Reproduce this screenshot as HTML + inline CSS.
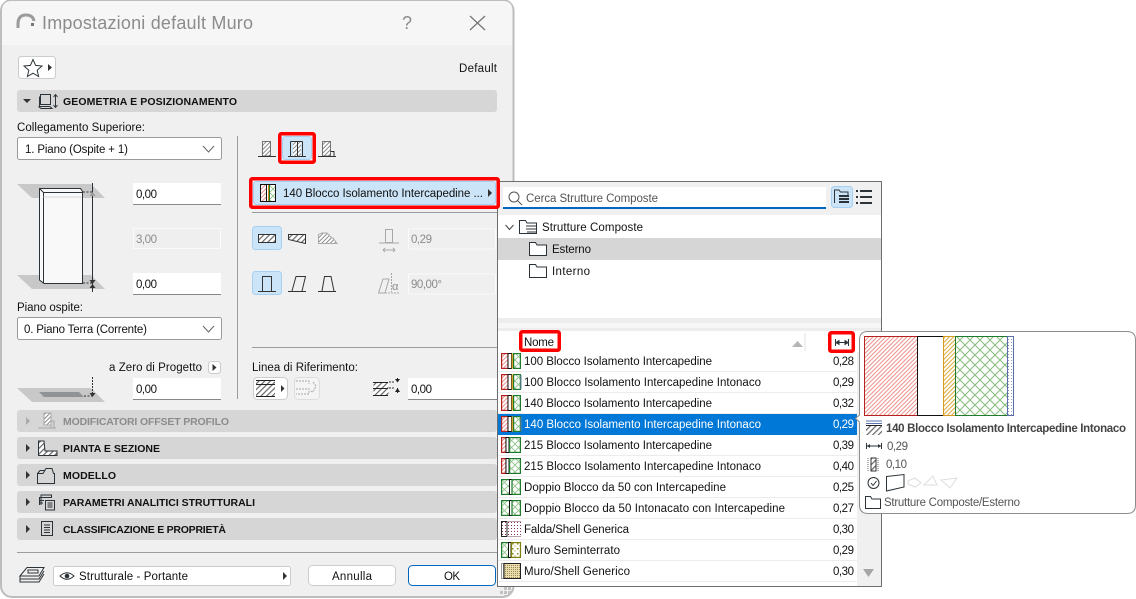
<!DOCTYPE html>
<html><head><meta charset="utf-8"><style>
html,body{margin:0;padding:0;background:#fff;width:1136px;height:599px;overflow:hidden}
svg{display:block}
text{font-family:"Liberation Sans",sans-serif;font-size:11.5px;fill:#111}
.b{font-weight:bold;font-size:10.5px}
.g{fill:#8c8c8c}
.ln{fill:none;stroke:#2b3338;stroke-width:1}
.lg{fill:none;stroke:#a8a8a8;stroke-width:1}
.inp{fill:#fff;stroke:none}
</style></head><body>
<svg xmlns="http://www.w3.org/2000/svg" width="1136" height="599" viewBox="0 0 1136 599">
<defs>
<pattern id="hr" width="3" height="3" patternUnits="userSpaceOnUse" patternTransform="rotate(45)"><rect width="3" height="3" fill="#fff"/><rect width="1" height="3" fill="#ee8f8b"/></pattern>
<pattern id="ho" width="3" height="3" patternUnits="userSpaceOnUse" patternTransform="rotate(45)"><rect width="3" height="3" fill="#fff"/><rect width="1" height="3" fill="#e0a93a"/></pattern>
<pattern id="hg" width="3" height="3" patternUnits="userSpaceOnUse" patternTransform="rotate(45)"><rect width="3" height="3" fill="#fff"/><rect width="1" height="3" fill="#8a8a8a"/></pattern>
<pattern id="hd" width="4" height="4" patternUnits="userSpaceOnUse" patternTransform="rotate(45)"><rect width="4" height="4" fill="#fff"/><rect width="1.2" height="4" fill="#666"/></pattern>
<pattern id="cg" width="10" height="10" patternUnits="userSpaceOnUse"><rect width="10" height="10" fill="#fff"/><path d="M0 0L10 10M10 0L0 10" stroke="#86bb7c" stroke-width="1"/></pattern>
<pattern id="cs" width="7" height="7" patternUnits="userSpaceOnUse"><rect width="7" height="7" fill="#fff"/><path d="M0 0L7 7M7 0L0 7" stroke="#8cc284" stroke-width=".8"/></pattern>
<pattern id="dp" width="3" height="3" patternUnits="userSpaceOnUse"><rect width="3" height="3" fill="#fff"/><rect x="1" y="1" width="1" height="1" fill="#8a3550"/></pattern>
<pattern id="dy" width="2" height="2" patternUnits="userSpaceOnUse"><rect width="2" height="2" fill="#e8dcb0"/><rect width="1" height="1" fill="#9b8a4a"/></pattern>
<pattern id="ds" width="5" height="5" patternUnits="userSpaceOnUse"><rect width="5" height="5" fill="#fff"/><rect x="1" y="1" width="1.500" height="1.500" fill="#8a8a10"/><rect x="3.500" y="3.500" width="1" height="1" fill="#8a8a10"/></pattern>
<pattern id="db" width="3" height="3" patternUnits="userSpaceOnUse"><rect width="3" height="3" fill="#fff"/><rect width="1" height="1" fill="#8f9dc8"/></pattern>

<g id="sA"><rect x=".6" y=".6" width="6.4" height="14.8" fill="url(#hr)" stroke="#b5211c" stroke-width="1.200"/><rect x="7" y=".5" width="3.500" height="15" fill="#fff" stroke="#111"/><rect x="10.500" y=".5" width="1.500" height="15" fill="#d9a02c"/><rect x="12.600" y=".6" width="6.800" height="14.800" fill="url(#cs)" stroke="#1f7a2c" stroke-width="1.200"/></g>
<g id="sB"><rect x=".6" y=".6" width="6.400" height="14.800" fill="url(#hr)" stroke="#b5211c" stroke-width="1.200"/><rect x="7" y=".5" width="3.500" height="15" fill="#fff" stroke="#111"/><rect x="10.500" y=".5" width="1.500" height="15" fill="#d9a02c"/><rect x="12.600" y=".6" width="6.800" height="14.800" fill="url(#cs)" stroke="#1f7a2c" stroke-width="1.200"/><rect x="19.500" y="1" width="1" height="14" fill="#6d7fb5"/></g>
<g id="sC"><rect x=".6" y=".6" width="4.400" height="14.800" fill="url(#hr)" stroke="#b5211c" stroke-width="1.200"/><rect x="5" y=".5" width="3" height="15" fill="#fff" stroke="#111"/><rect x="8.600" y=".6" width="10.800" height="14.800" fill="url(#cs)" stroke="#1f7a2c" stroke-width="1.200"/></g>
<g id="sD"><rect x=".6" y=".6" width="8" height="14.800" fill="url(#cs)" stroke="#1f7a2c" stroke-width="1.200"/><rect x="8.500" y=".5" width="2.500" height="15" fill="#fff" stroke="#111"/><rect x="11" y=".6" width="8.400" height="14.800" fill="url(#cs)" stroke="#1f7a2c" stroke-width="1.200"/></g>
<g id="sE"><rect x="6" y="1" width="14" height="14" fill="url(#dp)"/><rect x=".5" y=".5" width="5.500" height="15" fill="url(#dp)" stroke="#222"/><path d="M6 .5H20M6 15.500H20" stroke="#b9a0a8"/></g>
<g id="sF"><rect x=".6" y=".6" width="7" height="14.800" fill="url(#cs)" stroke="#1f7a2c" stroke-width="1.200"/><rect x="7.500" y=".5" width="2.500" height="15" fill="#fff" stroke="#111"/><rect x="10.500" y=".6" width="9" height="14.800" fill="url(#ds)" stroke="#7f7f10" stroke-width="1.200"/></g>
<g id="sG"><rect x=".5" y=".5" width="2" height="15" fill="#fff" stroke="#999"/><rect x="3" y=".5" width="16.500" height="15" fill="url(#dy)" stroke="#222"/></g>

<g id="fold"><path d="M.5 13.500V.5H6.500L8 3H17.500V13.500Z" fill="#fff" stroke="#2b3338"/></g>
<g id="chev"><path d="M0 0L5.500 6L11 0" fill="none" stroke="#666" stroke-width="1"/></g>
</defs>

<!-- Dialog -->
<rect x="1" y="0" width="512.500" height="597" rx="11" fill="#f0f0f0" stroke="#bdbdbd" stroke-width="2"/>
<path d="M2 45V11Q2 1 12 1H503Q512.500 1 512.500 11V45Z" fill="#f6f6f6"/>
<path d="M18 28V24Q18 15 26 15Q33 15 34 21" fill="none" stroke="#9b9b9b" stroke-width="3"/><rect x="31" y="23" width="3" height="3" fill="#777"/>
<text x="42" y="29" style="font-size:18px" class="g" textLength="211">Impostazioni default Muro</text>
<text x="402" y="29" style="font-size:18px" class="g">?</text>
<path d="M470 16L485 30M485 16L470 30" stroke="#777" stroke-width="1.300" fill="none"/>

<rect x="18.500" y="56.500" width="37" height="22" rx="3" fill="#fff" stroke="#ccc"/>
<path d="M33 59.500L35.600 65.400L42 66L37.200 70.300L38.600 76.500L33 73.200L27.400 76.500L28.800 70.300L24 66L30.400 65.400Z" fill="none" stroke="#2b3338" stroke-width="1"/>
<path d="M48 64L52 67.500L48 71Z" fill="#333"/>
<text x="459" y="72" textLength="38" style="font-size:11.500px">Default</text>

<!-- Section bars -->
<rect x="17" y="90" width="480" height="22" rx="3" fill="#d6d6d6"/>
<path d="M23 99H31L27 103Z" fill="#333"/>
<rect x="40.500" y="94.500" width="10" height="10" class="ln"/><path d="M39.500 96.500V106.500H50M38.500 106.500L41 108.500H52L50 106.500" class="ln"/><path d="M55.500 95V107M53.500 97L55.500 94.500L57.500 97M53.500 105L55.500 107.500L57.500 105" class="ln"/>
<text x="63" y="105" class="b" textLength="174">GEOMETRIA E POSIZIONAMENTO</text>

<rect x="17" y="410" width="480" height="22" rx="3" fill="#d6d6d6"/>
<rect x="17" y="437" width="480" height="22" rx="3" fill="#d6d6d6"/>
<rect x="17" y="464" width="480" height="22" rx="3" fill="#d6d6d6"/>
<rect x="17" y="491" width="480" height="22" rx="3" fill="#d6d6d6"/>
<rect x="17" y="518" width="480" height="22" rx="3" fill="#d6d6d6"/>
<path d="M26 417L30 421L26 425Z" fill="#aaa"/><path d="M26 444L30 448L26 452Z" fill="#333"/><path d="M26 471L30 475L26 479Z" fill="#333"/><path d="M26 498L30 502L26 506Z" fill="#333"/><path d="M26 525L30 529L26 533Z" fill="#333"/>
<text x="63" y="425" class="b g" textLength="166">MODIFICATORI OFFSET PROFILO</text>
<text x="63" y="452" class="b" textLength="97">PIANTA E SEZIONE</text>
<text x="63" y="479" class="b" textLength="53">MODELLO</text>
<text x="63" y="506" class="b" textLength="192">PARAMETRI ANALITICI STRUTTURALI</text>
<text x="63" y="533" class="b" textLength="163">CLASSIFICAZIONE E PROPRIETÀ</text>
<!-- section icons -->
<rect x="44" y="413" width="7" height="12" fill="url(#hg)" stroke="#aaa"/><path d="M38 428H56M51 428V421H54V428" class="lg"/>
<path d="M38.500 441V455.500H57V451H45L44 441Z" fill="url(#hd)" stroke="#2b3338"/>
<path d="M37.500 473.500H43L46 468.500H52L53.500 473.500H54.500V483.500H37.500Z" class="ln" fill="#f5f5f5"/><path d="M37.500 473.500L40 470.500H45" class="ln"/>
<path d="M39.500 505V497.500H51.500V495H41V505" class="ln"/><path d="M39.500 500.500H44M39.500 503H43" class="ln"/><rect x="45.500" y="500.500" width="9" height="9.500" class="ln" fill="#f5f5f5"/><path d="M47.500 503H52.500M47.500 505H52.500M47.500 507H52.500" class="ln"/>
<rect x="41.500" y="521.500" width="11" height="14" class="ln"/><path d="M44 525H50M44 527.500H50M44 530H50M44 532.500H50" class="ln"/>

<!-- Left column -->
<text x="17" y="131" textLength="128">Collegamento Superiore:</text>
<rect x="17.500" y="137.500" width="204" height="22" rx="2" fill="#fff" stroke="#9a9a9a"/>
<text x="25" y="153" textLength="103">1. Piano (Ospite + 1)</text>
<use href="#chev" x="203" y="146"/>
<path d="M237.500 136V399" stroke="#9c9c9c"/>

<path d="M17 184H91L105 198H32Z" fill="#c8c8c8"/>
<path d="M17 275H91L105 289H32Z" fill="#c8c8c8"/>
<path d="M39.500 188.500H80.500L82.500 191.500V283.500H44L39.500 280Z" fill="#f9f9f9" stroke="#2b3338"/>
<path d="M39.500 188.500L43.500 192.500H82.500M43.500 192.500V283.500" fill="none" stroke="#2b3338"/>
<path d="M43.500 197H82" stroke="#d9d9d9"/>
<path d="M92.500 183V292" stroke="#2b3338"/>
<path d="M83 192H92M83 283H92" stroke="#2b3338" stroke-dasharray="2 1.500"/>
<path d="M89.500 196L92.500 192L95.500 196Z" fill="#999"/><path d="M89.500 280H95.500L92.500 284L95.500 288H89.500L92.500 284Z" fill="#333"/>

<rect x="133" y="183" width="88" height="22" class="inp"/><path d="M133 204.500H221" stroke="#888"/>
<text x="136" y="198" textLength="21">0,00</text>
<rect x="133.500" y="228.500" width="87" height="20" fill="#efefef" stroke="#fafafa"/>
<text x="136" y="243" class="g" textLength="21">3,00</text>
<rect x="133" y="273" width="88" height="22" class="inp"/><path d="M133 294.500H221" stroke="#888"/>
<text x="136" y="288" textLength="21">0,00</text>
<text x="17" y="311" textLength="66">Piano ospite:</text>
<rect x="17.500" y="317.500" width="204" height="22" rx="2" fill="#fff" stroke="#9a9a9a"/>
<text x="24" y="333" textLength="123">0. Piano Terra (Corrente)</text>
<use href="#chev" x="203" y="326"/>
<text x="109" y="371" textLength="93">a Zero di Progetto</text>
<rect x="208.500" y="361.500" width="12" height="12" rx="3" fill="#fff" stroke="#ccc"/><path d="M212.500 364L216.500 367.500L212.500 371Z" fill="#333"/>
<path d="M17 388H91L105 402H32Z" fill="#c8c8c8"/>
<path d="M39 392H79L84 397H44Z" fill="#8f9396"/>
<path d="M92.500 377V395" stroke="#2b3338" stroke-dasharray="2 1"/><path d="M84 396H92" stroke="#2b3338" stroke-dasharray="2 1.500"/><path d="M89.500 393H95.500L92.500 397Z" fill="#333"/>
<rect x="133" y="378" width="88" height="22" class="inp"/><path d="M133 399.500H221" stroke="#888"/>
<text x="136" y="393" textLength="21">0,00</text>

<!-- Right column top -->
<rect x="262.500" y="141.500" width="8" height="14.500" fill="url(#hg)" stroke="#555" stroke-width=".8"/><path d="M258 156.500H276" stroke="#333"/>
<rect x="282.500" y="136.500" width="29" height="23" rx="3" fill="#cce4f7" stroke="#a5d0f2"/>
<rect x="293" y="141.500" width="8" height="14.500" fill="url(#hg)" stroke="none"/><path d="M290.500 141.500V156M297.500 141.500V156M302.500 141.500V156M290.500 141.500H302.500M288 156.500H306" stroke="#333" fill="none"/>
<rect x="322.500" y="141.500" width="8" height="14.500" fill="url(#hg)" stroke="#555" stroke-width=".8"/><path d="M318 156.500H336M330.500 151.500H334V156" stroke="#333" fill="none"/>

<rect x="253.500" y="181.500" width="242" height="23" rx="3" fill="#cce4f7" stroke="#a5d0f2"/>
<rect x="260.500" y="184.500" width="15" height="17" fill="#fff" stroke="#111"/>
<rect x="261" y="185" width="5" height="16" fill="url(#hr)"/><path d="M266.500 185V201" stroke="#111"/><path d="M268.500 185V201" stroke="#d48a1a"/><path d="M269.500 185V201" stroke="#1f7a2c"/><rect x="270" y="185" width="5" height="16" fill="url(#cs)"/>
<text x="283" y="197" textLength="200">140 Blocco Isolamento Intercapedine ...</text>
<path d="M488 189L492 193L488 197Z" fill="#333"/>
<path d="M252 212.500H498" stroke="#9c9c9c"/>

<rect x="252.500" y="226.500" width="29" height="23" rx="3" fill="#cce4f7" stroke="#a5d0f2"/>
<rect x="258.500" y="234.500" width="17" height="8" fill="url(#hd)" stroke="#333"/>
<path d="M288.500 234.500H305.500V243.500L288.500 239.500Z" fill="url(#hd)" stroke="#333"/>
<path d="M318.500 243.500V234.500L322 233H327L332 238H333L337 243.500Z" fill="url(#hg)" stroke="#aaa"/>
<path d="M385.500 229.500H392.500V242.500H385.500ZM379 243H399M383 250H395M383 250L385 248M383 250L385 252M395 250L393 248M395 250L393 252" class="lg"/>
<rect x="408.500" y="229" width="87" height="20" fill="#efefef" stroke="#fafafa"/>
<text x="411" y="243" class="g" textLength="21">0,29</text>

<rect x="252.500" y="271.500" width="29" height="23" rx="3" fill="#cce4f7" stroke="#a5d0f2"/>
<path d="M262.500 291V276.500H271.500V291M258 291.500H276" stroke="#333" fill="none"/>
<path d="M292 291L296 276.500H305.500L302 291M288 291.500H306" stroke="#333" fill="none"/>
<path d="M322 291L324.500 276.500H331L334 291M318 291.500H336" stroke="#333" fill="none"/>
<path d="M378.500 293L383 279H389L385 293Z" class="lg"/><path d="M391.500 273V292M379 293H400" class="lg" stroke-dasharray="2 1"/>
<text x="392" y="290" class="g" style="font-size:11px">α</text>
<rect x="408.500" y="274" width="87" height="20" fill="#efefef" stroke="#fafafa"/>
<text x="411" y="288" class="g" textLength="31">90,00°</text>
<path d="M252 347.500H498" stroke="#9c9c9c"/>
<text x="252" y="371" textLength="106">Linea di Riferimento:</text>
<rect x="253.500" y="377.500" width="34" height="22" rx="4" fill="#fff" stroke="#ccc"/>
<rect x="256" y="381" width="19" height="15" fill="url(#hd)"/><path d="M256 380.500H275M256 384.500H275M256 396.500H275" stroke="#222"/>
<path d="M281 385L284.500 388.500L281 392Z" fill="#333"/>
<rect x="294.500" y="377.500" width="25" height="22" rx="4" fill="#f4f4f4" stroke="#ddd"/>
<path d="M296 381H309V384M296 389H309V394H296M313 382L316 386L313 392L310 391" class="lg" stroke-dasharray="2 1"/>
<rect x="373.500" y="382.500" width="15" height="13" fill="url(#hd)" stroke="none"/><path d="M373 382.500H388M373 388.500H388M373 395.500H388" stroke="#222"/>
<path d="M389 382H395M389 388H395" stroke="#333" stroke-dasharray="2 1"/>
<path d="M397.500 378V382M397.500 388V393" stroke="#222"/><path d="M395 379L397.500 382.500L400 379ZM395 392L397.500 388L400 392Z" fill="#222"/>
<rect x="408" y="378" width="89" height="22" class="inp"/><path d="M408 399.500H497" stroke="#888"/>
<text x="411" y="393" textLength="21">0,00</text>

<!-- Footer -->
<path d="M17 552.500H497" stroke="#9c9c9c"/>
<path d="M20 576L27 567.500H44L39 576Z" fill="#f0f0f0" stroke="#2b3338"/><path d="M20 576V579L25 579H39L44 571M20 579V582H39L44 574" class="ln"/><rect x="28" y="570" width="10" height="3" class="ln"/>
<rect x="53.500" y="566.500" width="237" height="19" rx="2" fill="#fff" stroke="#ccc"/>
<path d="M60 576Q67 569.500 74 576Q67 582.500 60 576Z" class="ln"/><circle cx="67" cy="576" r="2.300" fill="#2b3338"/>
<text x="79" y="580" textLength="109">Strutturale - Portante</text>
<path d="M283 572L287 576L283 580Z" fill="#333"/>
<rect x="308.500" y="565.500" width="87" height="20" rx="4" fill="#fff" stroke="#ccc"/>
<text x="332" y="580" textLength="40">Annulla</text>
<rect x="408.500" y="565.500" width="87" height="20" rx="4" fill="#fff" stroke="#0067c0"/>
<text x="444" y="580" textLength="16">OK</text>
<g fill="#c2c2c2"><rect x="504" y="587" width="3" height="3"/><rect x="508" y="587" width="3" height="3"/><rect x="500" y="591" width="3" height="3"/><rect x="504" y="591" width="3" height="3"/><rect x="508" y="591" width="3" height="3"/><rect x="504" y="595" width="3" height="2"/></g>

<!-- Popup -->
<rect x="497.500" y="181.500" width="384" height="405" fill="#fff" stroke="#6e6e6e"/>
<rect x="498" y="182" width="383" height="33" fill="#f0f0f0"/>
<rect x="503" y="187" width="323" height="21" fill="#fff"/><rect x="503" y="207" width="323" height="2" fill="#0067c0"/>
<circle cx="514" cy="197" r="5" fill="none" stroke="#555"/><path d="M518 201L522 205" stroke="#555"/>
<text x="526" y="202" style="fill:#555" textLength="132">Cerca Strutture Composte</text>
<rect x="831.500" y="186.500" width="21" height="21" rx="3" fill="#cce4f7" stroke="#a5d0f2"/>
<path d="M834.500 203V190H839L840.500 192H848V195" class="ln"/><path d="M839 196H849M839 199H849M839 202H849" stroke="#2b3338" stroke-width="2"/>
<path d="M856 191H858M860 191H872M856 197H858M860 197H872M856 203H858M860 203H872" stroke="#2b3338" stroke-width="2"/>
<path d="M505.500 225L509.500 229.500L513.500 225" fill="none" stroke="#444"/>
<use href="#fold" x="519" y="220"/><path d="M526 226H537M526 229H537M527 232H537" stroke="#2b3338"/>
<text x="542" y="231" textLength="101">Strutture Composte</text>
<rect x="498" y="238" width="383" height="22" fill="#d6d6d6"/>
<use href="#fold" x="529" y="242"/>
<text x="552" y="253" textLength="39">Esterno</text>
<use href="#fold" x="529" y="264"/>
<text x="552" y="275" textLength="38">Interno</text>
<rect x="498" y="318" width="383" height="5" fill="#ededed"/><rect x="498" y="323" width="383" height="5" fill="#f6f6f6"/><rect x="498" y="328" width="383" height="3" fill="#ededed"/>

<text x="524" y="346" textLength="30">Nome</text>
<path d="M792 347L797.500 341L803 347Z" fill="#b5b5b5"/><path d="M805 333V351" stroke="#e2e2e2"/>
<path d="M835.500 339V346M848.500 339V346M836 342.500H848M836 342.500L839 340.500V344.500ZM848 342.500L845 340.500V344.500Z" stroke="#2b3338" fill="#2b3338"/>

<rect x="857" y="352" width="24" height="234" fill="#f0f0f0"/>
<path d="M863 569H874L868.500 577Z" fill="#a6a6a6"/>
<g stroke="#ececec"><path d="M498 371.500H857M498 392.500H857M498 413.500H857M498 434.500H857M498 455.500H857M498 476.500H857M498 497.500H857M498 518.500H857M498 539.500H857M498 560.500H857M498 581.500H857"/></g>
<rect x="498" y="414" width="359" height="21" fill="#0078d7"/>

<use href="#sA" x="501" y="353"/><use href="#sB" x="501" y="374"/><use href="#sA" x="501" y="395"/><use href="#sB" x="501" y="416"/>
<use href="#sC" x="501" y="437"/><use href="#sC" x="501" y="458"/><use href="#sD" x="501" y="479"/><use href="#sD" x="501" y="500"/>
<use href="#sE" x="501" y="521"/><use href="#sF" x="501" y="542"/><use href="#sG" x="501" y="563"/>

<text x="524" y="365" textLength="188">100 Blocco Isolamento Intercapedine</text>
<text x="524" y="386" textLength="237">100 Blocco Isolamento Intercapedine Intonaco</text>
<text x="524" y="407" textLength="188">140 Blocco Isolamento Intercapedine</text>
<text x="524" y="428" textLength="237" style="fill:#fff">140 Blocco Isolamento Intercapedine Intonaco</text>
<text x="524" y="449" textLength="188">215 Blocco Isolamento Intercapedine</text>
<text x="524" y="470" textLength="237">215 Blocco Isolamento Intercapedine Intonaco</text>
<text x="524" y="491" textLength="202">Doppio Blocco da 50 con Intercapedine</text>
<text x="524" y="512" textLength="261">Doppio Blocco da 50 Intonacato con Intercapedine</text>
<text x="524" y="533" textLength="105">Falda/Shell Generica</text>
<text x="524" y="554" textLength="96">Muro Seminterrato</text>
<text x="524" y="575" textLength="106">Muro/Shell Generico</text>
<g>
<text x="833" y="365" textLength="21">0,28</text><text x="833" y="386" textLength="21">0,29</text><text x="833" y="407" textLength="21">0,32</text><text x="833" y="428" textLength="21" style="fill:#fff">0,29</text><text x="833" y="449" textLength="21">0,39</text><text x="833" y="470" textLength="21">0,40</text><text x="833" y="491" textLength="21">0,25</text><text x="833" y="512" textLength="21">0,27</text><text x="833" y="533" textLength="21">0,30</text><text x="833" y="554" textLength="21">0,29</text><text x="833" y="575" textLength="21">0,30</text>
</g>

<!-- Tooltip -->
<path d="M867.500 331.500H1127Q1135.500 331.500 1135.500 340V505Q1135.500 513.500 1127 513.500H868Q859.500 513.500 859.500 505V422L855.500 418.500L859.500 415V340Q859.500 331.500 867.500 331.500Z" fill="#fff" stroke="#8d8d8d"/>
<rect x="864.500" y="336.500" width="53" height="79" fill="url(#hr)" stroke="#b5211c"/>
<rect x="917.500" y="336.500" width="26" height="79" fill="#fff" stroke="#111"/>
<rect x="943.500" y="336.500" width="12" height="79" fill="url(#ho)" stroke="#d49a24"/>
<rect x="955.500" y="336.500" width="52" height="79" fill="url(#cg)" stroke="#1f7a2c"/>
<rect x="1007.500" y="336.500" width="6" height="79" fill="url(#db)" stroke="#5a6fa8"/>

<path d="M866 421H882M866 423.500H882" stroke="#5a75b0"/><rect x="866" y="425" width="16" height="10" fill="url(#hd)"/><path d="M866 425.500H882" stroke="#222"/>
<text x="886" y="432" class="b" style="fill:#444;font-size:11.500px" textLength="240">140 Blocco Isolamento Intercapedine Intonaco</text>
<path d="M866.500 443V449M881.500 443V449M867 446H881" stroke="#2b3338"/><path d="M867 446L870 444V448ZM881 446L878 444V448Z" fill="#2b3338"/>
<text x="887" y="450" style="fill:#555" textLength="21">0,29</text>
<path d="M868 458V471M878 458V471" stroke="#666" stroke-dasharray="1 1"/><rect x="871" y="458" width="5" height="13" fill="url(#hd)" stroke="#333"/>
<text x="886" y="468" style="fill:#555" textLength="21">0,10</text>
<circle cx="873.500" cy="483" r="5.500" class="ln"/><path d="M871 483L873 485.500L876.500 481" class="ln"/>
<path d="M886.500 476.500L904 474.500V487L886.500 491Z" fill="#fff" stroke="#2b3338"/>
<path d="M908 481L915 478L921 483L915 487L908 484Z M924 485L933 476L937 485H929Z M941 480L957 478L950 488Z" fill="none" stroke="#ddd"/>
<path d="M865.500 508.500V496.500H870.500L872 499H880.500V508.500Z" fill="#fff" stroke="#2b3338"/>
<text x="884" y="506" style="fill:#555" textLength="136">Strutture Composte/Esterno</text>

<!-- Red highlights -->
<g fill="none" stroke="#fe0000" stroke-width="3.500">
<rect x="279.750" y="133.750" width="34.500" height="28.500" rx="1.500"/>
<rect x="250.750" y="178.750" width="247.500" height="28.500" rx="1.500"/>
<rect x="520.750" y="331.750" width="38.500" height="18.500" rx="1.500"/>
<rect x="829.750" y="332.750" width="23.500" height="18.500" rx="1.500"/>
</g>
</svg>
</body></html>
